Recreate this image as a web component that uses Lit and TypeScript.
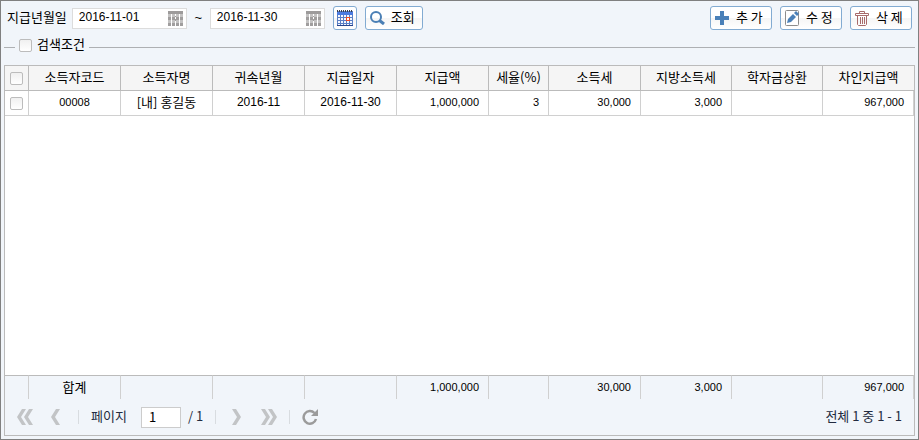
import { LitElement, html, css, svg } from "lit";
import { customElement, state } from "lit/decorators.js";

interface Column {
  label: string;
  width: number;
  kind: "text" | "date" | "code" | "amount";
  value: string;
  total: string;
}

const COLUMNS: Column[] = [
  { label: "소득자코드", width: 92, kind: "code", value: "00008", total: "합계" },
  { label: "소득자명", width: 92, kind: "text", value: "[내] 홍길동", total: "" },
  { label: "귀속년월", width: 92, kind: "date", value: "2016-11", total: "" },
  { label: "지급일자", width: 92, kind: "date", value: "2016-11-30", total: "" },
  { label: "지급액", width: 92, kind: "amount", value: "1,000,000", total: "1,000,000" },
  { label: "세율(%)", width: 60, kind: "amount", value: "3", total: "" },
  { label: "소득세", width: 92, kind: "amount", value: "30,000", total: "30,000" },
  { label: "지방소득세", width: 91, kind: "amount", value: "3,000", total: "3,000" },
  { label: "학자금상환", width: 91, kind: "amount", value: "", total: "" },
  { label: "차인지급액", width: 91, kind: "amount", value: "967,000", total: "967,000" },
];

const PICK_WIDTH = 24;
const TOTAL_WIDTH = COLUMNS.reduce((sum, c) => sum + c.width, PICK_WIDTH);

const DAYS = [0, 1, 2, 3].flatMap((c) => [0, 1, 2, 3].map((r) => [c, r]));

const dateIcon = html`<svg width="15" height="15" viewBox="0 0 15 15" aria-hidden="true">
  <path d="M0 0h15v3H0z" fill="#9d9b9b" />
  ${DAYS.map(
    ([c, r]) => svg`<rect x=${c * 4} y=${3 + r * 3} width="3" height="3" fill=${r % 2 ? "#a09e9e" : "#c4c3c3"} />`,
  )}
  <path d="M7 5h1v1h-1zM7 8h1v2h-1z" fill="#a09e9e" />
</svg>`;

const calendarIcon = html`<svg width="16" height="16" viewBox="0 0 16 16" aria-hidden="true">
  <path d="M0 1h16v15H0z" fill="#5a7fc4" />
  <path d="M0 2h16v3H0z" fill="#4a7be0" />
  <path
    d="M0.500 0v2M2.500 0v2M4.500 0v2M6.500 0v2M8.500 0v2M10.500 0v2M12.500 0v2M14.500 0v2"
    stroke="#3b3f4c"
  />
  ${[0, 1, 2, 3, 4].flatMap((c) =>
    [0, 1, 2, 3].map((r) => svg`<rect x=${1 + c * 3} y=${5 + r * 3} width="2" height="2" fill="#f4f7ff" />`),
  )}
  <path d="M0 15h16v1H0z" fill="#27458c" />
  <rect x="9.500" y="7.500" width="3" height="3" fill="#fff" stroke="#f04a20" />
</svg>`;

const searchIcon = html`<svg width="15" height="14" viewBox="0 0 15 14" aria-hidden="true">
  <circle cx="6" cy="6" r="5" fill="none" stroke="#4a7fb5" stroke-width="2" />
  <path d="M9.500 9.500L14 13" stroke="#4a7fb5" stroke-width="3" />
</svg>`;

const addIcon = html`<svg width="14" height="14" viewBox="0 0 14 14" aria-hidden="true">
  <path d="M5 0h4v5h5v4H9v5H5V9H0V5h5z" fill="#4a80b8" />
</svg>`;

const editIcon = html`<svg width="14" height="16" viewBox="0 0 14 16" aria-hidden="true">
  <rect x="0.500" y="0.500" width="13" height="15" rx="1" fill="#fff" stroke="#8c8c8c" />
  <path d="M2 13l1-4 5-5 3 3-5 5z" fill="#4a80b8" />
  <path d="M9 3l2-2 3 3-2 2z" fill="#4a80b8" />
</svg>`;

const trashIcon = html`<svg
  width="14" height="15" viewBox="0 0 14 15" fill="none" stroke="#a86a6a" aria-hidden="true"
>
  <path
    d="M4.500 2.500v-2h5v2M0.500 2.500h13v2h-13zM2.500 4.500v9l1 1h7l1-1v-9M5.500 6v7M7.500 6v7M9.500 6v7"
  />
</svg>`;

const chevron = (double: boolean, forward: boolean) => {
  const w = double ? 16 : 9;
  return html`<svg width=${w} height="16" viewBox="0 0 ${w} 16" fill="#c2c4c6" aria-hidden="true">
    <g transform=${forward ? `translate(${w} 0) scale(-1 1)` : "translate(0 0)"}>
      <path d="M5 0h4L4 8l5 8H5L0 8z" />
      ${double ? svg`<path d="M12 0h4l-5 8 5 8h-4L7 8z" />` : null}
    </g>
  </svg>`;
};

const refreshIcon = html`<svg width="17" height="16" viewBox="0 0 17 16" aria-hidden="true">
  <path d="M12.500 4A6.300 6.300 0 1 0 14 10" fill="none" stroke="#9b9b9b" stroke-width="2.500" />
  <path d="M16 0v7H9z" fill="#9b9b9b" />
</svg>`;

@customElement("app-root")
export class AppRoot extends LitElement {
  @state() private from = "2016-11-01";
  @state() private to = "2016-11-30";

  static styles = css`
    :host {
      display: flex;
      flex-direction: column;
      box-sizing: border-box;
      min-height: 100vh;
      padding: 5px 3px 3px;
      border: 1px solid #808080;
      background: #f1f5fa;
      color: #000;
      font: 13px/16px "Noto Sans CJK KR", sans-serif;
    }
    * { box-sizing: border-box; }
    svg { display: block; flex: none; }
    button, input { font: inherit; color: inherit; margin: 0; }
    .toolbar { display: flex; align-items: center; height: 24px; padding: 0 3px; }
    .toolbar > label { margin-right: 5px; padding-bottom: 2px; }
    .date {
      display: flex; align-items: center; width: 115px; height: 21px; padding: 0 3px 0 6px;
      background: #fff; border: 1px solid #dcdcdc;
    }
    .date input {
      flex: 1; min-width: 0; padding: 0 0 2px; border: 0; outline: 0; background: none;
      font: 12px/16px "Liberation Sans", sans-serif;
    }
    .icon-btn { padding: 0; border: 0; background: none; }
    .tilde { width: 23px; text-align: center; font-family: "Liberation Sans", sans-serif; }
    .btn {
      display: flex; align-items: center; gap: 7px; height: 24px; padding: 0 4px;
      border: 1px solid #82abd2; border-radius: 3px; white-space: nowrap;
      background: linear-gradient(#fff 50%, #f5f5f5 50%, #fff);
    }
    .btn span { padding-bottom: 2px; }
    .cal { width: 24px; padding: 0 3px; margin: 0 8px; }
    .search { width: 58px; gap: 6px; }
    .actions { display: flex; gap: 8px; margin-left: auto; }
    .actions .btn { width: 62px; }
    .filter { display: flex; align-items: center; height: 35px; }
    .filter label {
      display: flex; align-items: center; align-self: stretch; gap: 5px; padding: 0 4px 4px;
    }
    .filter label span { padding-bottom: 3px; }
    .rule { width: 11px; border-top: 1px solid #aeb0b3; }
    .rule.long { flex: 1; }
    .check {
      appearance: none; display: block; width: 13px; height: 13px; border: 1px solid #bcbcbc;
      border-radius: 2px; background: linear-gradient(#f0f0f0, #fff);
    }
    .grid {
      flex: 1; display: flex; flex-direction: column; border: 1px solid #bbb; background: #fff;
    }
    table { width: 100%; table-layout: fixed; border-collapse: separate; border-spacing: 0; }
    th, td {
      height: 25px; padding: 0 9px 2px; border-right: 1px solid #d0d0d0;
      border-bottom: 1px solid #d0d0d0; font-weight: 400; white-space: nowrap; text-align: center;
    }
    th { background: #f5f5f5; border-color: #bbb; padding: 0 0 2px; }
    th:last-child { border-right: 0; }
    .pick { padding: 0 5px; }
    .code, .amount { font: 11px/16px "Liberation Sans", "Noto Sans CJK KR", sans-serif; }
    .date-cell { font: 12px/16px "Liberation Sans", sans-serif; }
    .amount { text-align: right; }
    .totals { margin-top: auto; background: #f1f5fa; }
    .totals td { height: 24px; border-bottom: 0; border-top: 1px solid #bbb; }
    .pager {
      display: flex; align-items: center; height: 36px; padding: 0 12px;
      background: #f1f5fa; color: #222b40;
    }
    .pager input {
      width: 40px; height: 21px; margin: 0 7px 0 14px; padding: 0 7px 1px;
      border: 1px solid #ccc; background: #fff; color: #000;
    }
    .pager > label, .pager > span { padding-bottom: 3px; }
    .nav { display: flex; align-items: center; }
    .before { gap: 18px; margin-right: 12px; }
    .after { gap: 16px; margin-left: 12px; }
    .after .far { margin: 0 -4px 0 4px; }
    .sep { width: 1px; height: 14px; background: #d8dce0; }
    .far { display: flex; align-items: center; gap: 12px; }
    .status { margin-left: auto; }
  `;

  private cols() {
    return html`<colgroup>
      <col style="width:${PICK_WIDTH}px" />
      ${COLUMNS.map((c) => html`<col style="width:${(c.width / TOTAL_WIDTH) * 100}%" />`)}
    </colgroup>`;
  }

  private cellClass(kind: Column["kind"]) {
    return kind === "date" ? "date-cell" : kind;
  }

  render() {
    return html`
      <div class="toolbar">
        <label for="from">지급년월일</label>
        <div class="date">
          <input id="from" .value=${this.from} />
          <button class="icon-btn" aria-label="시작일 선택">${dateIcon}</button>
        </div>
        <span class="tilde">~</span>
        <div class="date">
          <input aria-label="종료일" .value=${this.to} />
          <button class="icon-btn" aria-label="종료일 선택">${dateIcon}</button>
        </div>
        <button class="btn cal" aria-label="기간 선택">${calendarIcon}</button>
        <button class="btn search">${searchIcon}<span>조회</span></button>
        <div class="actions">
          <button class="btn">${addIcon}<span>추 가</span></button>
          <button class="btn">${editIcon}<span>수 정</span></button>
          <button class="btn">${trashIcon}<span>삭 제</span></button>
        </div>
      </div>
      <div class="filter">
        <span class="rule"></span>
        <label><input class="check" type="checkbox" /><span>검색조건</span></label>
        <span class="rule long"></span>
      </div>
      <div class="grid">
        <table>
          ${this.cols()}
          <thead>
            <tr>
              <th class="pick"><input class="check" type="checkbox" aria-label="전체 선택" /></th>
              ${COLUMNS.map((c) => html`<th>${c.label}</th>`)}
            </tr>
          </thead>
          <tbody>
            <tr>
              <td class="pick"><input class="check" type="checkbox" aria-label="행 선택" /></td>
              ${COLUMNS.map((c) => html`<td class=${this.cellClass(c.kind)}>${c.value}</td>`)}
            </tr>
          </tbody>
        </table>
        <table class="totals">
          ${this.cols()}
          <tbody>
            <tr>
              <td></td>
              ${COLUMNS.map(
                (c) => html`<td class=${c.kind === "amount" ? "amount" : "text"}>${c.total}</td>`,
              )}
            </tr>
          </tbody>
        </table>
        <div class="pager">
          <div class="nav before">
            <button class="icon-btn" aria-label="첫 페이지">${chevron(true, false)}</button>
            <button class="icon-btn" aria-label="이전 페이지">${chevron(false, false)}</button>
            <i class="sep"></i>
          </div>
          <label for="page">페이지</label>
          <input id="page" value="1" />
          <span>/ 1</span>
          <div class="nav after">
            <i class="sep"></i>
            <button class="icon-btn" aria-label="다음 페이지">${chevron(false, true)}</button>
            <div class="far">
              <button class="icon-btn" aria-label="마지막 페이지">${chevron(true, true)}</button>
              <i class="sep"></i>
              <button class="icon-btn" aria-label="새로고침">${refreshIcon}</button>
            </div>
          </div>
          <span class="status">전체 1 중 1 - 1</span>
        </div>
      </div>
    `;
  }
}
